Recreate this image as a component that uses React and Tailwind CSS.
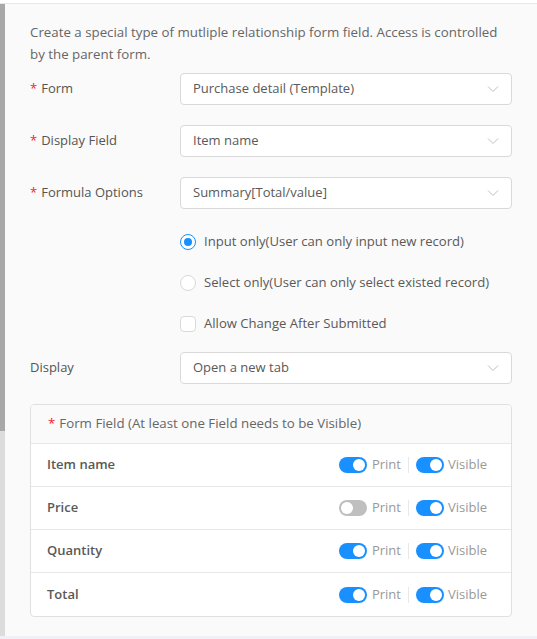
import React, { useState } from "react";

const font = { fontFamily: '"Segoe UI", "Open Sans", "Noto Sans", sans-serif' };

const Chevron = () => (
  <svg width="12" height="12" viewBox="0 0 12 12" className="shrink-0">
    <path d="M1 3.5 L6 8.5 L11 3.5" fill="none" stroke="#bfbfbf" strokeWidth="1" />
  </svg>
);

const Select = ({ value }) => (
  <div className="flex h-8 flex-1 items-center justify-between rounded border border-[#d9d9d9] bg-white pl-3 pr-3">
    <span className="text-[13px] text-[#595959]">{value}</span>
    <Chevron />
  </div>
);

const Label = ({ required, children }) => (
  <div className="w-[150px] shrink-0 text-[13px] text-[#555]">
    {required && <span className="mr-1 text-[#f5222d]">*</span>}
    {children}
  </div>
);

const Switch = ({ on }) => (
  <div
    className={
      "relative h-4 w-7 shrink-0 rounded-full " + (on ? "bg-[#1890ff]" : "bg-[#bfbfbf]")
    }
  >
    <div
      className={
        "absolute top-[2px] h-3 w-3 rounded-full bg-white " + (on ? "left-[14px]" : "left-[2px]")
      }
    />
  </div>
);

const fields = [
  { name: "Item name", print: true, visible: true },
  { name: "Price", print: false, visible: true },
  { name: "Quantity", print: true, visible: true },
  { name: "Total", print: true, visible: true },
];

export default function App() {
  const [mode] = useState("input");
  return (
    <div className="flex h-[639px] w-[537px] flex-col bg-white" style={font}>
      <div className="h-[3px] shrink-0 bg-white" />
      <div className="flex flex-1 border-t border-[#e8e8e8]">
        <div className="flex w-[5px] shrink-0 flex-col">
          <div className="h-[427px] bg-[#a8a8a8]" />
          <div className="flex-1 bg-[#dcdcdc]" />
        </div>
        <div className="flex-1 bg-[#fafafa] pl-[25px] pr-[25px] pt-[17px]">
          <p className="text-[13.3px] leading-[22px] text-[#666]">
            Create a special type of mutliple relationship form field. Access is controlled by the
            parent form.
          </p>
          <div className="mt-[8px] flex flex-col gap-5">
            <div className="flex items-center">
              <Label required>Form</Label>
              <Select value="Purchase detail (Template)" />
            </div>
            <div className="flex items-center">
              <Label required>Display Field</Label>
              <Select value="Item name" />
            </div>
            <div className="flex items-center">
              <Label required>Formula Options</Label>
              <Select value="Summary[Total/value]" />
            </div>
          </div>
          <div className="ml-[150px] mt-[25px] flex flex-col gap-[25px] text-[13.1px] text-[#595959]">
            <label className="flex h-4 items-center gap-2">
              <span className="flex h-4 w-4 items-center justify-center rounded-full border border-[#1890ff] bg-white">
                {mode === "input" && <span className="h-2 w-2 rounded-full bg-[#1890ff]" />}
              </span>
              Input only(User can only input new record)
            </label>
            <label className="flex h-4 items-center gap-2">
              <span className="h-4 w-4 rounded-full border border-[#d9d9d9] bg-white" />
              Select only(User can only select existed record)
            </label>
            <label className="flex h-4 items-center gap-2">
              <span className="h-4 w-4 rounded-sm border border-[#d9d9d9] bg-white" />
              Allow Change After Submitted
            </label>
          </div>
          <div className="mt-[20px] flex items-center">
            <Label>Display</Label>
            <Select value="Open a new tab" />
          </div>
          <div className="mt-5 overflow-hidden rounded border border-[#e0e0e0] bg-white">
            <div className="flex h-[39px] items-center border-b border-[#e8e8e8] bg-[#fafafa] px-[17px] text-[13.3px] text-[#666]">
              <span className="mr-1 text-[#f5222d]">*</span>
              Form Field (At least one Field needs to be Visible)
            </div>
            {fields.map((f, i) => (
              <div
                key={i}
                className={
                  "flex h-[43px] items-center justify-between pl-[16px] pr-[24px] " +
                  (i < fields.length - 1 ? "border-b border-[#e8e8e8]" : "")
                }
              >
                <span className="text-[13px] font-semibold text-[#595959]">{f.name}</span>
                <div className="flex items-center text-[13px] text-[#999]">
                  <Switch on={f.print} />
                  <span className="ml-[5px]">Print</span>
                  <span className="mx-[7px] h-4 w-px bg-[#e8e8e8]" />
                  <Switch on={f.visible} />
                  <span className="ml-[4px]">Visible</span>
                </div>
              </div>
            ))}
          </div>
        </div>
      </div>
      <div className="h-[3px] shrink-0 bg-[#f0f0f5]" />
    </div>
  );
}
